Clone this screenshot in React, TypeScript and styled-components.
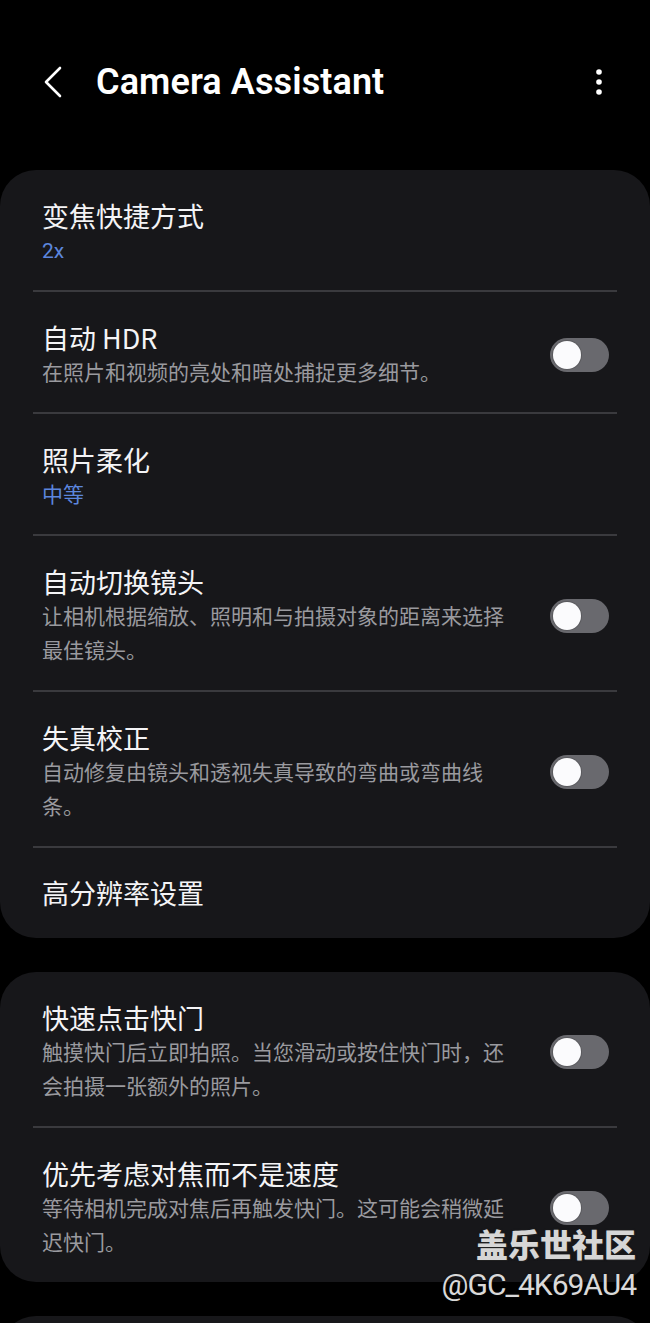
import React from "react";
import styled, { createGlobalStyle } from "styled-components";

const GlobalStyle = createGlobalStyle`
  html, body {
    margin: 0;
    padding: 0;
    background: #000;
  }
  body {
    font-family: "Noto Sans CJK SC", Roboto, sans-serif;
    -webkit-font-smoothing: antialiased;
  }
`;

const Page = styled.div`
  position: relative;
  width: 650px;
  height: 1323px;
  overflow: hidden;
  background: #000;
  color: #fff;
`;

const Header = styled.header`
  height: 164px;
  display: flex;
  align-items: center;
  padding: 0 41px 0 38px;
  margin-bottom: 6px;
`;

const BackButton = styled.button`
  width: 30px;
  height: 40px;
  padding: 0;
  border: none;
  background: none;
  display: flex;
  align-items: center;
  justify-content: center;
  color: #fff;
`;

const Title = styled.h1`
  flex: 1;
  margin: 0 0 0 28px;
  font-family: Roboto, "Noto Sans", sans-serif;
  font-size: 36px;
  font-weight: 600;
  letter-spacing: 0.1px;
  line-height: 44px;
`;

const MoreButton = styled.button`
  width: 20px;
  height: 40px;
  padding: 0;
  border: none;
  background: none;
  display: flex;
  align-items: center;
  justify-content: center;
  color: #fff;
`;

const Cards = styled.main`
  display: flex;
  flex-direction: column;
  gap: 34px;
`;

const Card = styled.section`
  background: #17171a;
  border-radius: 36px;
  padding: 0 33px;
`;

const Item = styled.div<{ $compact?: boolean }>`
  display: flex;
  align-items: center;
  gap: 16px;
  padding: ${(p) => (p.$compact ? "27px 8px 27px 9px" : "28px 8px 22px 9px")};
  & + & {
    border-top: 2px solid #3a3a3e;
  }
`;

const Texts = styled.div`
  flex: 1;
  min-width: 0;
`;

const ItemTitle = styled.div`
  font-size: 27px;
  line-height: 36px;
  color: #f4f4f6;
  font-family: "Noto Sans CJK SC", Roboto, sans-serif;
`;

const Subtitle = styled.div<{ $accent?: boolean }>`
  width: 470px;
  font-size: 21px;
  line-height: 34px;
  color: ${(p) => (p.$accent ? "#5c86dd" : "#9a9a9f")};
  font-family: Roboto, "Noto Sans CJK SC", sans-serif;
`;

const Track = styled.div`
  flex: none;
  width: 59px;
  height: 34px;
  border-radius: 17px;
  background: #69696e;
  display: flex;
  align-items: center;
  padding: 0 3px;
  box-sizing: border-box;
`;

const Knob = styled.div`
  width: 28px;
  height: 28px;
  border-radius: 50%;
  background: #fbfbfd;
  box-shadow: 0 0 0 1px #5a5a5e;
`;

const Peek = styled.div`
  height: 40px;
  background: #17171a;
  border-radius: 36px 36px 0 0;
`;

const Watermark = styled.div`
  position: absolute;
  right: 14px;
  top: 1221px;
  display: flex;
  flex-direction: column;
  align-items: flex-end;
  pointer-events: none;
`;

const MarkName = styled.div`
  font-family: "Noto Sans CJK SC", sans-serif;
  font-size: 32px;
  font-weight: 900;
  line-height: 44px;
  color: #d6d6d6;
  text-shadow: 0 0 2px #222, 1px 1px 1px #222;
`;

const MarkUser = styled.div`
  font-family: Roboto, "Noto Sans", sans-serif;
  font-size: 30px;
  line-height: 40px;
  letter-spacing: -1px;
  color: #d9d9d9;
  text-shadow: 0 0 2px #111;
`;

function Toggle() {
  return (
    <Track>
      <Knob />
    </Track>
  );
}

type Setting = {
  title: string;
  sub?: string;
  accent?: boolean;
  toggle?: boolean;
};

const groupOne: Setting[] = [
  { title: "变焦快捷方式", sub: "2x", accent: true },
  { title: "自动 HDR", sub: "在照片和视频的亮处和暗处捕捉更多细节。", toggle: true },
  { title: "照片柔化", sub: "中等", accent: true },
  {
    title: "自动切换镜头",
    sub: "让相机根据缩放、照明和与拍摄对象的距离来选择最佳镜头。",
    toggle: true,
  },
  {
    title: "失真校正",
    sub: "自动修复由镜头和透视失真导致的弯曲或弯曲线条。",
    toggle: true,
  },
  { title: "高分辨率设置" },
];

const groupTwo: Setting[] = [
  {
    title: "快速点击快门",
    sub: "触摸快门后立即拍照。当您滑动或按住快门时，还会拍摄一张额外的照片。",
    toggle: true,
  },
  {
    title: "优先考虑对焦而不是速度",
    sub: "等待相机完成对焦后再触发快门。这可能会稍微延迟快门。",
    toggle: true,
  },
];

function SettingsCard({ items }: { items: Setting[] }) {
  return (
    <Card>
      {items.map((s) => (
        <Item key={s.title} $compact={!s.sub}>
          <Texts>
            <ItemTitle>{s.title}</ItemTitle>
            {s.sub && <Subtitle $accent={s.accent}>{s.sub}</Subtitle>}
          </Texts>
          {s.toggle && <Toggle />}
        </Item>
      ))}
    </Card>
  );
}

export default function App() {
  return (
    <Page>
      <GlobalStyle />
      <Header>
        <BackButton aria-label="back">
          <svg width="20" height="32" viewBox="0 0 20 32" fill="none">
            <polyline
              points="17,2 3,16 17,30"
              stroke="currentColor"
              strokeWidth="2.6"
              strokeLinecap="round"
              strokeLinejoin="round"
            />
          </svg>
        </BackButton>
        <Title>Camera Assistant</Title>
        <MoreButton aria-label="more">
          <svg width="8" height="28" viewBox="0 0 8 28" fill="currentColor">
            <circle cx="4" cy="4" r="2.8" />
            <circle cx="4" cy="14" r="2.8" />
            <circle cx="4" cy="24" r="2.8" />
          </svg>
        </MoreButton>
      </Header>
      <Cards>
        <SettingsCard items={groupOne} />
        <SettingsCard items={groupTwo} />
        <Peek />
      </Cards>
      <Watermark>
        <MarkName>盖乐世社区</MarkName>
        <MarkUser>@GC_4K69AU4</MarkUser>
      </Watermark>
    </Page>
  );
}
